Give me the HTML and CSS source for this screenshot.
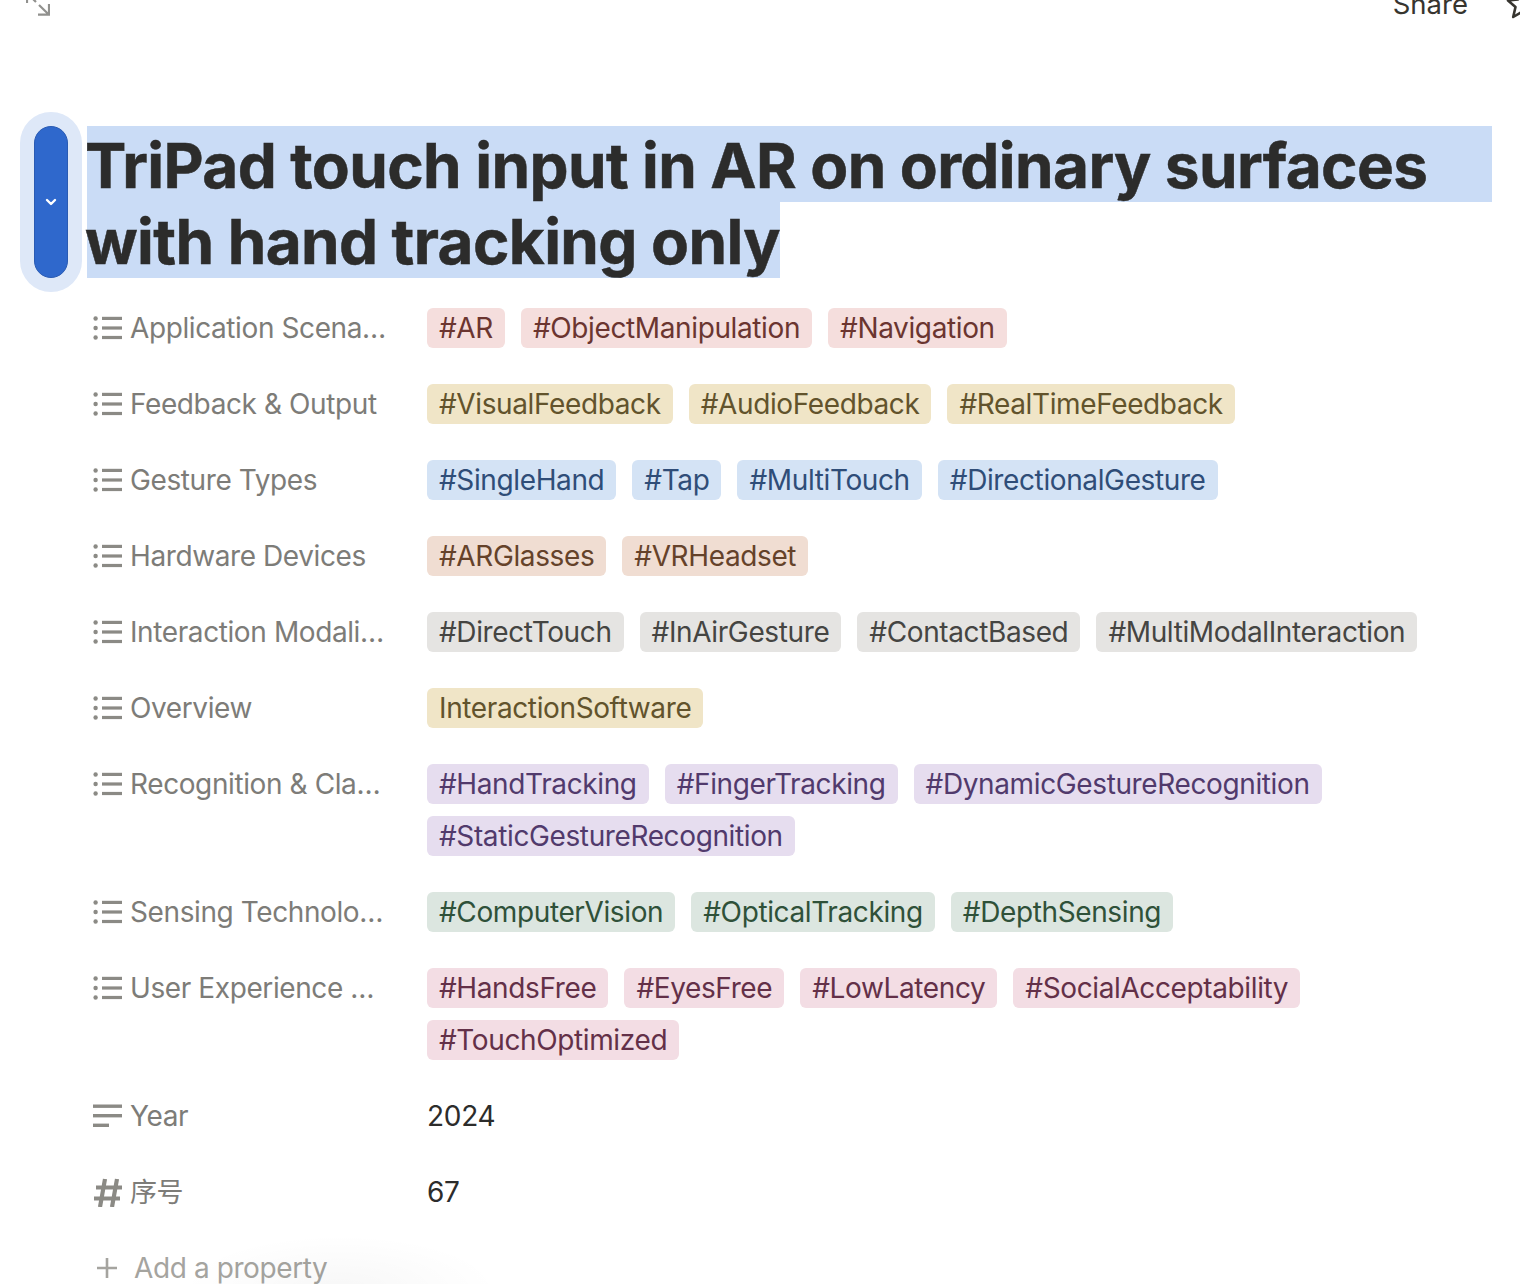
FILE: index.html
```html
<!DOCTYPE html>
<html lang="en">
<head>
  <meta charset="UTF-8" />
  <title>TriPad touch input in AR on ordinary surfaces with hand tracking only</title>
  <link rel="stylesheet" href="styles.css">
</head>
<body>
  <header class="topbar">
    <svg class="expand" width="24" height="24" viewBox="0 0 24 24" fill="none" stroke="#91918e" stroke-width="2.2">
      <path d="M1 11 V1 H11 M1 1 L10 10 M13 13 L23 22.7 M23 12 V22.7 H12"/>
    </svg>
    <div class="topbar-right">
      <span class="share">Share</span>
      <svg class="star" width="34" height="34" viewBox="0 0 34 34" fill="none" stroke="#37352f" stroke-width="2.6" stroke-linejoin="round">
        <path d="M17 3 L21 12.5 L31 13.5 L23.5 20 L25.8 30 L17 24.8 L8.2 30 L10.5 20 L3 13.5 L13 12.5 Z"/>
      </svg>
    </div>
  </header>

  <main class="page">
    <div class="title-row">
      <div class="handle">
        <svg width="12" height="8" viewBox="0 0 12 8" fill="none" stroke="#fff" stroke-width="2.4" stroke-linecap="round" stroke-linejoin="round">
          <path d="M2 2 L6 6 L10 2"/>
        </svg>
      </div>
      <h1 class="title">
        <span class="sel sel-full">TriPad touch input in AR on ordinary surfaces</span>
        <span class="sel">with hand tracking only</span>
      </h1>
    </div>

    <section class="props">
      <div class="prop">
        <div class="prop-name"><svg class="ic"><use href="#ic-list"/></svg><span>Application Scena…</span></div>
        <div class="tags">
          <span class="tag red">#AR</span>
          <span class="tag red">#ObjectManipulation</span>
          <span class="tag red">#Navigation</span>
        </div>
      </div>
      <div class="prop">
        <div class="prop-name"><svg class="ic"><use href="#ic-list"/></svg><span>Feedback &amp; Output</span></div>
        <div class="tags">
          <span class="tag yellow">#VisualFeedback</span>
          <span class="tag yellow">#AudioFeedback</span>
          <span class="tag yellow">#RealTimeFeedback</span>
        </div>
      </div>
      <div class="prop">
        <div class="prop-name"><svg class="ic"><use href="#ic-list"/></svg><span>Gesture Types</span></div>
        <div class="tags">
          <span class="tag blue">#SingleHand</span>
          <span class="tag blue">#Tap</span>
          <span class="tag blue">#MultiTouch</span>
          <span class="tag blue">#DirectionalGesture</span>
        </div>
      </div>
      <div class="prop">
        <div class="prop-name"><svg class="ic"><use href="#ic-list"/></svg><span>Hardware Devices</span></div>
        <div class="tags">
          <span class="tag brown">#ARGlasses</span>
          <span class="tag brown">#VRHeadset</span>
        </div>
      </div>
      <div class="prop">
        <div class="prop-name"><svg class="ic"><use href="#ic-list"/></svg><span>Interaction Modali…</span></div>
        <div class="tags">
          <span class="tag gray">#DirectTouch</span>
          <span class="tag gray">#InAirGesture</span>
          <span class="tag gray">#ContactBased</span>
          <span class="tag gray">#MultiModalInteraction</span>
        </div>
      </div>
      <div class="prop">
        <div class="prop-name"><svg class="ic"><use href="#ic-list"/></svg><span>Overview</span></div>
        <div class="tags">
          <span class="tag yellow">InteractionSoftware</span>
        </div>
      </div>
      <div class="prop">
        <div class="prop-name"><svg class="ic"><use href="#ic-list"/></svg><span>Recognition &amp; Cla…</span></div>
        <div class="tags">
          <span class="tag purple">#HandTracking</span>
          <span class="tag purple">#FingerTracking</span>
          <span class="tag purple">#DynamicGestureRecognition</span>
          <span class="tag purple">#StaticGestureRecognition</span>
        </div>
      </div>
      <div class="prop">
        <div class="prop-name"><svg class="ic"><use href="#ic-list"/></svg><span>Sensing Technolo…</span></div>
        <div class="tags">
          <span class="tag green">#ComputerVision</span>
          <span class="tag green">#OpticalTracking</span>
          <span class="tag green">#DepthSensing</span>
        </div>
      </div>
      <div class="prop">
        <div class="prop-name"><svg class="ic"><use href="#ic-list"/></svg><span>User Experience …</span></div>
        <div class="tags">
          <span class="tag pink">#HandsFree</span>
          <span class="tag pink">#EyesFree</span>
          <span class="tag pink">#LowLatency</span>
          <span class="tag pink">#SocialAcceptability</span>
          <span class="tag pink">#TouchOptimized</span>
        </div>
      </div>
      <div class="prop">
        <div class="prop-name"><svg class="ic"><use href="#ic-text"/></svg><span>Year</span></div>
        <div class="value">2024</div>
      </div>
      <div class="prop">
        <div class="prop-name"><svg class="ic"><use href="#ic-hash"/></svg><span class="cjk">序号</span></div>
        <div class="value">67</div>
      </div>
      <div class="prop add">
        <svg width="20" height="20" viewBox="0 0 20 20" stroke="#a5a49f" stroke-width="2.6"><path d="M10 0 V20 M0 10 H20"/></svg>
        <span>Add a property</span>
      </div>
    </section>
  </main>

  <svg class="defs" width="0" height="0">
    <symbol id="ic-list" viewBox="0 0 30 30">
      <g fill="#8b8a85">
        <circle cx="2.6" cy="5.5" r="2.2"/><circle cx="2.6" cy="15" r="2.2"/><circle cx="2.6" cy="24.5" r="2.2"/>
        <rect x="9" y="3.8" width="20" height="3.2"/><rect x="9" y="13.4" width="20" height="3.2"/><rect x="9" y="22.9" width="20" height="3.2"/>
      </g>
    </symbol>
    <symbol id="ic-text" viewBox="0 0 30 30">
      <g fill="#8b8a85">
        <rect x="0" y="3.5" width="29" height="3.4"/><rect x="0" y="13" width="29" height="3.4"/><rect x="0" y="22.6" width="16" height="3.4"/>
      </g>
    </symbol>
    <symbol id="ic-hash" viewBox="0 0 30 30">
      <path d="M12 2 L7 30 M24 2 L19 30 M3 10.5 H29 M1 21.5 H27" stroke="#8b8a85" stroke-width="4.2" fill="none"/>
    </symbol>
  </svg>
</body>
</html>
```

FILE: styles.css
```css
* {
  box-sizing: border-box;
}
html, body {
  margin: 0;
  height: 1284px;
  overflow: hidden;
}
body {
  font-family: 'Inter', 'Noto Sans CJK SC', sans-serif;
  background: #fff;
  color: #37352f;
  position: relative;
}
body::after {
  content: "";
  position: absolute;
  left: 180px;
  bottom: -60px;
  width: 320px;
  height: 110px;
  background: radial-gradient(ellipse at center, rgba(0,0,0,0.03), rgba(0,0,0,0) 70%);
  pointer-events: none;
}
.defs {
  position: absolute;
}

/* top bar is cropped by the window edge */
.topbar {
  height: 40px;
  margin-top: -16px;
  padding: 0 0 0 26px;
  display: flex;
  align-items: center;
  justify-content: space-between;
}
.topbar-right {
  display: flex;
  align-items: center;
  gap: 37px;
  margin-right: -19px;
}
.share {
  font-size: 27.5px;
  color: #37352f;
}

.page {
  padding: 102px 0 0 34px;
}
.title-row {
  display: flex;
  gap: 19px;
}
.handle {
  flex: none;
  width: 34px;
  height: 152px;
  border-radius: 17px;
  background: #2f68cc;
  border: 1px solid #2a5bb3;
  box-shadow: 0 0 0 14px #dee8f8;
  display: flex;
  align-items: center;
  justify-content: center;
}
.title {
  margin: 0;
  flex: 1;
  padding-right: 28px;
  font-size: 62px;
  line-height: 73px;
  font-weight: 700;
  color: #2c2c2b;
  letter-spacing: -0.6px;
  -webkit-text-stroke: 0.5px #2c2c2b;
}
.sel {
  display: block;
  width: fit-content;
  height: 76px;
  padding-top: 3px;
  text-indent: -2px;
  background: #cadcf6;
  white-space: nowrap;
}
.sel-full {
  width: auto;
}

.props {
  margin: 30px 0 0 59px;
}
.prop {
  display: flex;
  margin-bottom: 36px;
}
.prop-name {
  flex: none;
  width: 334px;
  height: 40px;
  display: flex;
  align-items: center;
  gap: 7px;
  font-size: 28px;
  letter-spacing: -0.4px;
  color: #7d7c78;
  white-space: nowrap;
}
.ic {
  width: 30px;
  height: 30px;
  flex: none;
}
.cjk {
  font-size: 27px;
  margin-top: -4px;
}
.tags {
  flex: 1;
  display: flex;
  flex-wrap: wrap;
  gap: 12px 16px;
  padding-right: 60px;
}
.tag {
  height: 40px;
  line-height: 40px;
  padding: 0 12px;
  border-radius: 6px;
  font-size: 28px;
  letter-spacing: -0.38px;
  white-space: nowrap;
}
.red { background: #f5dedd; color: #6b3530; }
.yellow { background: #f0e5c7; color: #62532c; }
.blue { background: #d4e3f5; color: #2f4d78; }
.brown { background: #f0ddd2; color: #65422a; }
.gray { background: #e5e4e2; color: #454542; }
.purple { background: #e6ddef; color: #513a6c; }
.green { background: #dce6e0; color: #2f5139; }
.pink { background: #f3dde4; color: #633048; }
.value {
  height: 40px;
  line-height: 40px;
  font-size: 28px;
  letter-spacing: -0.3px;
  color: #2c2c2b;
}
.add {
  align-items: center;
  height: 40px;
  padding-left: 4px;
  gap: 17px;
  font-size: 28px;
  letter-spacing: -0.4px;
  color: #a5a49f;
}
```
